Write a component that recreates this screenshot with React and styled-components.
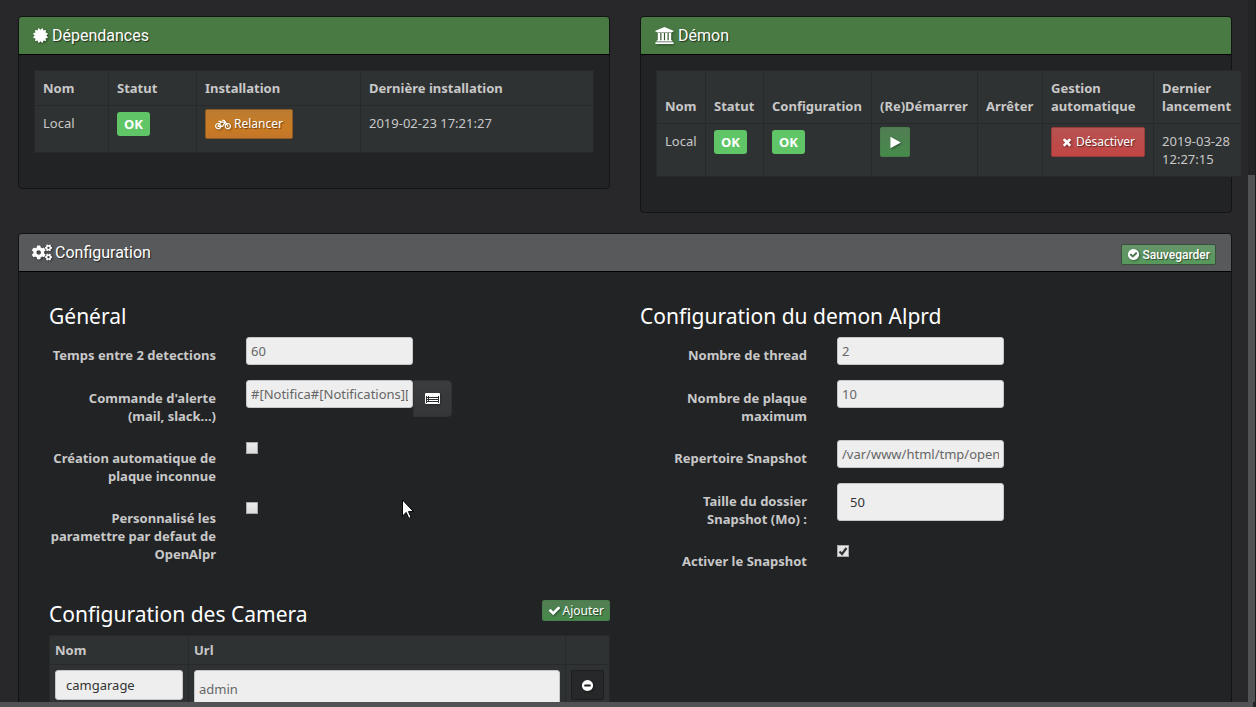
import React from 'react';
import styled, { createGlobalStyle, css } from 'styled-components';
import { FaBicycle, FaCogs } from 'react-icons/fa';

const GlobalStyle = createGlobalStyle`
* { box-sizing: border-box; }
body {
  margin: 0;
  background: #28282b;
  color: #c8c8c8;
  font-family: "Noto Sans", "Open Sans", sans-serif;
  font-size: 13px;
  line-height: 18px;
}
button, input { font-family: inherit; }
`;

const Window = styled.div`
display:grid;
grid-template-columns:minmax(0, 1fr) 8px;
grid-template-rows:minmax(0, 1fr) 5px;
height:100vh;
overflow:hidden;
`;

const Page = styled.main`
padding:16px 16px 0 18px;
overflow:hidden;
`;

const ScrollTrack = styled.div`
background:#242426;
border-right:1px solid #1b1c1e;
padding-top:175px;
`;

const ScrollThumb = styled.div`
height:100%;
background:#515254;
`;

const BottomTrack = styled.div`
grid-column:1 / -1;
background:#515254;
border-right:3px solid #242426;
`;

const Row = styled.div`
display:grid;
grid-template-columns:repeat(2, minmax(0, 1fr));
column-gap:30px;
align-items:start;
margin-bottom:20px;
`;

const Box = styled.section`
min-width:0;
background:#222325;
border:1px solid #121314;
border-radius:4px;
`;

const BoxHead = styled.header`
display:flex;
align-items:center;
justify-content:space-between;
height:38px;
padding:0 15px 0 13px;
background:${props => props.$green ? '#4a7a43' : '#58595b'};
border-radius:3px 3px 0 0;
border-bottom:1px solid #000;
`;

const BoxTitle = styled.h3`
display:flex;
align-items:center;
gap:3px;
margin:0;
color:#fff;
font:400 16px/20px Roboto, sans-serif;
text-shadow:1px 1px 1px rgba(0,0,0,0.6);
`;

const BoxBody = styled.div`
padding:15px 15px 35px;
`;

const Glyph = styled.svg`
width:${props => props.$w || props.$size}px;
height:${props => props.$size}px;
flex:none;
fill:currentColor;
filter:drop-shadow(1px 1px 1px rgba(0,0,0,0.4));
`;

const Table = styled.table`
width:100%;
border-collapse:collapse;
background:#2f3233;
text-align:left;
`;

const Th = styled.th`
padding:${props => props.$narrow ? 5 : 8}px;
width:${props => props.$width ? `${props.$width}px` : 'auto'};
min-width:${props => props.$width || 0}px;
border:1px solid #27292a;
vertical-align:bottom;
`;

const pads = { text: '8px', badge: '6px 8px', button: '3px 8px', field: '5px' };

const Td = styled.td`
height:${props => props.$kind === 'field' ? 'auto' : '47px'};
padding:${props => pads[props.$kind || 'text']};
border:1px solid #27292a;
vertical-align:top;
`;

const Badge = styled.span`
display:inline-block;
padding:3px 7px;
border-radius:3px;
background:#60c566;
color:#fff;
font-weight:700;
vertical-align:top;
`;

const tones = {
  orange: css`background:linear-gradient(#b97c33, #cb7b22 60%, #c2762a); border-color:#8c5a22;`,
  green: css`background:linear-gradient(#527d54, #468a4a); border-color:#477e4b;`,
  red: css`background:linear-gradient(#b75452, #c24644); border-color:#973c3b;`,
  save: css`background:linear-gradient(#66956a, #57985c); border-color:#3a503c;`,
  dark: css`background:#272829; border-color:#1d1e1f;`,
  slate: css`background:linear-gradient(#3a3c3e, #343638); border-color:#303234;`,
};

const Button = styled.button`
display:inline-flex;
align-items:center;
justify-content:center;
gap:${props => props.$small ? 2 : 3}px;
height:${props => props.$small ? 21 : 30}px;
padding:0 ${props => props.$small ? 5 : 9}px;
border:1px solid;
border-radius:2px;
color:#fff;
font-size:12px;
line-height:18px;
text-shadow:1px 1px 1px rgba(0,0,0,0.5);
vertical-align:top;
cursor:pointer;
${props => tones[props.$tone]}
`;

const SaveButton = styled(Button)`
margin-top:4px;
font-family:Roboto, sans-serif;
font-weight:500;
`;

const PlayButton = styled(Button)`
width:30px;
padding:0;
`;

const PickButton = styled(Button)`
flex:none;
width:39px;
height:37px;
border-radius:0 4px 4px 0;
`;

const Columns = styled.form`
display:grid;
grid-template-columns:repeat(2, minmax(0, 1fr));
padding:30px 15px;
`;

const Legend = styled.h4`
display:flex;
justify-content:space-between;
align-items:flex-start;
margin:0 15px 5px;
height:30px;
color:#fff;
font-weight:400;
font-size:21px;
line-height:28px;
`;

const Field = styled.div`
display:grid;
grid-template-columns:repeat(3, minmax(0, 1fr));
margin-bottom:15px;
`;

const Label = styled.label`
padding:9px 15px 0;
font-weight:700;
text-align:right;
`;

const Control = styled.div`
display:flex;
align-items:flex-start;
padding:0 15px;
`;

const Input = styled.input`
flex:none;
width:100%;
height:${props => props.$height || 28}px;
padding:0 ${props => props.$pad || 4}px;
border:1px solid #c4c6c8;
border-radius:3px;
background:#eee;
color:${props => props.$pad ? '#333' : '#666'};
font-size:13px;
vertical-align:top;
`;

const Tick = styled.input`
appearance:none;
width:12px;
height:12px;
margin:2px 0 0;
border:1px solid #a8a8a8;
background:linear-gradient(#ececec, #dcdcdc);
&:checked {
  background:#e4e4e4 url("data:image/svg+xml,%3Csvg xmlns='http://www.w3.org/2000/svg' viewBox='0 0 10 10'%3E%3Cpath d='M1.5 5.5 4 8 8.5 2' fill='none' stroke='%23333' stroke-width='2.2'/%3E%3C/svg%3E");
}
`;

const Cameras = styled.div`
margin-top:37px;
`;

const CameraTable = styled.div`
padding:0 15px;
`;

const Pointer = styled.svg`
position:absolute;
left:402px;
top:499px;
width:12px;
height:21px;
pointer-events:none;
`;

const paths = {
  certificate: 'M1504 896l138 135q30 28 20 70-12 41-52 51l-188 48 53 186q12 41-19 70-29 31-70 19l-186-53-48 188q-10 40-51 52-12 2-19 2-31 0-51-22l-135-138-135 138q-28 30-70 20-41-11-51-52l-48-188-186 53q-41 12-70-19-31-29-19-70l53-186-188-48q-40-10-52-51-10-42 20-70l138-135-138-135q-30-28-20-70 12-41 52-51l188-48-53-186q-12-41 19-70 29-31 70-19l186 53 48-188q10-41 51-51 41-12 70 19l135 139 135-139q29-30 70-19 41 10 51 51l48 188 186-53q41-12 70 19 31 29 19 70l-53 186 188 48q40 10 52 51 10 42-20 70z',
  bank: 'M960 0l960 384v128h-128q0 26-20.5 45t-48.5 19H197q-28 0-48.5-19T128 512H0V384zM256 640h256v768h128V640h256v768h128V640h256v768h128V640h256v768h59q28 0 48.5 19t20.5 45v64H128v-64q0-26 20.5-45t48.5-19h59V640zm1595 960q28 0 48.5 19t20.5 45v128H0v-128q0-26 20.5-45t48.5-19h1782z',
  times: 'M1490 1322q0 40-28 68l-136 136q-28 28-68 28t-68-28l-294-294-294 294q-28 28-68 28t-68-28l-136-136q-28-28-28-68t28-68l294-294-294-294q-28-28-28-68t28-68l136-136q28-28 68-28t68 28l294 294 294-294q28-28 68-28t68 28l136 136q28 28 28 68t-28 68l-294 294 294 294q28 28 28 68z',
  check: 'M1671 566q0 40-28 68l-724 724-136 136q-28 28-68 28t-68-28l-136-136-362-362q-28-28-28-68t28-68l136-136q28-28 68-28t68 28l294 295 656-657q28-28 68-28t68 28l136 136q28 28 28 68z',
  checkCircle: 'M1412 734q0-28-18-46l-91-90q-19-19-45-19t-45 19l-408 407-226-226q-19-19-45-19t-45 19l-91 90q-18 18-18 46 0 27 18 45l362 362q19 19 45 19 27 0 46-19l543-543q18-18 18-45zm252 162q0 209-103 385.5t-279.5 279.5-385.5 103-385.5-103-279.5-279.5-103-385.5 103-385.5 279.5-279.5 385.5-103 385.5 103 279.5 279.5 103 385.5z',
  minusCircle: 'M1344 960v-128q0-26-19-45t-45-19h-768q-26 0-45 19t-19 45v128q0 26 19 45t45 19h768q26 0 45-19t19-45zm320-64q0 209-103 385.5t-279.5 279.5-385.5 103-385.5-103-279.5-279.5-103-385.5 103-385.5 279.5-279.5 385.5-103 385.5 103 279.5 279.5 103 385.5z',
  play: 'M1576 927l-1328 738q-23 13-39.5 3t-16.5-36v-1472q0-26 16.5-36t39.5 3l1328 738q23 13 23 31t-23 31z',
};

function Icon({ name, size, w, box = '0 0 1792 1792' }) {
  return <Glyph viewBox={box} $size={size} $w={w} aria-hidden="true"><path d={paths[name]} /></Glyph>;
}

function ListIcon() {
  return (
    <Glyph viewBox="0 0 15 12" $size={12} $w={15} aria-hidden="true">
      <path fillRule="evenodd" d="M1 0h13q1 0 1 1v9q0 1-1 1H1q-1 0-1-1V1q0-1 1-1zM1 3v7h13V3zM2 3h1v1H2zM4 3h9v1H4zM2 5h1v1H2zM4 5h9v1H4zM2 7h1v1H2zM4 7h9v1H4zM2 9h11v1H2z" />
    </Glyph>
  );
}

function TextField({ id, label, value, children, ...rest }) {
  return (
    <Field>
      <Label htmlFor={id}>{label}</Label>
      <Control>
        <Input id={id} type="text" defaultValue={value} {...rest} />
        {children}
      </Control>
    </Field>
  );
}

function CheckField({ id, label, checked }) {
  return (
    <Field>
      <Label htmlFor={id}>{label}</Label>
      <Control><Tick id={id} type="checkbox" defaultChecked={checked} /></Control>
    </Field>
  );
}

function Dependencies() {
  return (
    <Box>
      <BoxHead $green>
        <BoxTitle><Icon name="certificate" size={17} /> Dépendances</BoxTitle>
      </BoxHead>
      <BoxBody>
        <Table>
          <thead>
            <tr>
              <Th $width={74}>Nom</Th>
              <Th $width={88}>Statut</Th>
              <Th $width={164}>Installation</Th>
              <Th>Dernière installation</Th>
            </tr>
          </thead>
          <tbody>
            <tr>
              <Td>Local</Td>
              <Td $kind="badge"><Badge>OK</Badge></Td>
              <Td $kind="button">
                <Button type="button" $tone="orange"><Glyph as={FaBicycle} $size={13} $w={16} />Relancer</Button>
              </Td>
              <Td>2019-02-23 17:21:27</Td>
            </tr>
          </tbody>
        </Table>
      </BoxBody>
    </Box>
  );
}

const daemonColumns = [
  ['Nom', 49],
  ['Statut', 58],
  ['Configuration', 108],
  ['(Re)Démarrer', 106],
  ['Arrêter', 65],
  ['Gestion automatique', 111],
  ['Dernier lancement', 88],
];

function Daemon() {
  return (
    <Box>
      <BoxHead $green>
        <BoxTitle><Icon name="bank" size={17} w={21} box="0 0 1920 1792" /> Démon</BoxTitle>
      </BoxHead>
      <BoxBody>
        <Table>
          <thead>
            <tr>
              {daemonColumns.map(([name, width]) => (
                <Th key={name} $width={width}>{name}</Th>
              ))}
            </tr>
          </thead>
          <tbody>
            <tr>
              <Td>Local</Td>
              <Td $kind="badge"><Badge>OK</Badge></Td>
              <Td $kind="badge"><Badge>OK</Badge></Td>
              <Td $kind="button">
                <PlayButton type="button" $tone="green" aria-label="(Re)Démarrer"><Icon name="play" size={13} /></PlayButton>
              </Td>
              <Td />
              <Td $kind="button">
                <Button type="button" $tone="red"><Icon name="times" size={12} />Désactiver</Button>
              </Td>
              <Td>2019-03-28 12:27:15</Td>
            </tr>
          </tbody>
        </Table>
      </BoxBody>
    </Box>
  );
}

function General() {
  return (
    <div>
      <Legend>Général</Legend>
      <TextField id="delay" label="Temps entre 2 detections" value="60" />
      <TextField id="alert" label={'Commande d\'alerte (mail,\u00a0slack...)'} value="#[Notifica#[Notifications][Slack]#">
        <PickButton type="button" $tone="slate" aria-label="Choisir une commande"><ListIcon /></PickButton>
      </TextField>
      <CheckField id="autoplate" label="Création automatique de plaque inconnue" />
      <CheckField id="custom" label="Personnalisé les paramettre par defaut de OpenAlpr" />
      <Cameras>
        <Legend>
          Configuration des Camera
          <Button type="button" $tone="green" $small><Icon name="check" size={13} />Ajouter</Button>
        </Legend>
        <CameraTable>
          <Table>
            <thead>
              <tr>
                <Th $narrow $width={139}>Nom</Th>
                <Th $narrow>Url</Th>
                <Th $narrow $width={43} />
              </tr>
            </thead>
            <tbody>
              <tr>
                <Td $kind="field"><Input aria-label="Nom" $height={30} $pad={10} defaultValue="camgarage" /></Td>
                <Td $kind="field"><Input aria-label="Url" $height={38} defaultValue="admin" /></Td>
                <Td $kind="field">
                  <Button type="button" $tone="dark" aria-label="Supprimer"><Icon name="minusCircle" size={13} /></Button>
                </Td>
              </tr>
            </tbody>
          </Table>
        </CameraTable>
      </Cameras>
    </div>
  );
}

function Alprd() {
  return (
    <div>
      <Legend>Configuration du demon Alprd</Legend>
      <TextField id="threads" label="Nombre de thread" value="2" />
      <TextField id="plates" label="Nombre de plaque maximum" value="10" />
      <TextField id="folder" label="Repertoire Snapshot" value="/var/www/html/tmp/openalpr" />
      <TextField id="quota" label="Taille du dossier Snapshot (Mo) :" value="50" $pad={12} $height={38} />
      <CheckField id="snapshot" label="Activer le Snapshot" checked />
    </div>
  );
}

export default function App() {
  return (
    <Window>
      <GlobalStyle />
      <Page>
        <Row>
          <Dependencies />
          <Daemon />
        </Row>
        <Box>
          <BoxHead>
            <BoxTitle><Glyph as={FaCogs} $size={17} $w={20} /> Configuration</BoxTitle>
            <SaveButton type="button" $tone="save" $small><Icon name="checkCircle" size={13} />Sauvegarder</SaveButton>
          </BoxHead>
          <Columns>
            <General />
            <Alprd />
          </Columns>
        </Box>
      </Page>
      <ScrollTrack><ScrollThumb /></ScrollTrack>
      <BottomTrack />
      <Pointer viewBox="0 0 12 21" aria-hidden="true">
        <path d="M.5 1v16l3.7-3.6 2.6 6 2.3-1-2.6-5.8h5z" fill="#fff" stroke="#000" />
      </Pointer>
    </Window>
  );
}
